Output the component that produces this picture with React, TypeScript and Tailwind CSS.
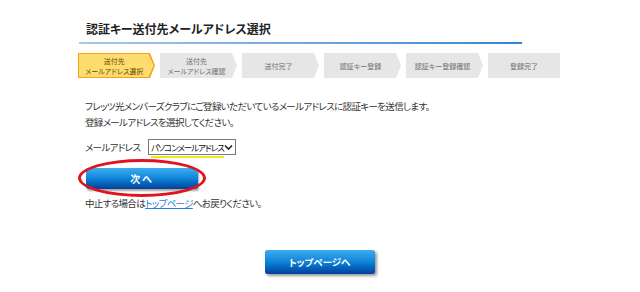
const steps = [
  { lines: ["送付先", "メールアドレス選択"], active: true },
  { lines: ["送付先", "メールアドレス確認"] },
  { lines: ["送付完了"] },
  { lines: ["認証キー登録"] },
  { lines: ["認証キー登録確認"] },
  { lines: ["登録完了"], last: true },
];

const jp = "font-['Noto_Sans_CJK_JP','Noto_Sans',sans-serif] [font-feature-settings:'palt']";

function Step({ lines, active, last }: { lines: string[]; active?: boolean; last?: boolean }) {
  const shape = last
    ? ""
    : "[clip-path:polygon(0_0,calc(100%-5px)_0,100%_50%,calc(100%-5px)_100%,0_100%)]";
  if (active) {
    return (
      <div className={`w-[77px] h-[25px] bg-[#f7a21b] p-[1px] pr-[1.5px] ${shape}`}>
        <div
          className={`w-full h-full bg-[#ffdc6e] flex flex-col items-center justify-center leading-[10px] text-[7px] text-[#6b4a00] pr-[4px] ${shape}`}
        >
          {lines.map((l) => (
            <span key={l}>{l}</span>
          ))}
        </div>
      </div>
    );
  }
  return (
    <div
      className={`${last ? "w-[72px]" : "w-[77px] pr-[4px]"} h-[25px] bg-[#e6e6e6] flex flex-col items-center justify-center leading-[10px] text-[7px] text-[#6f6f6f] ${shape}`}
    >
      {lines.map((l) => (
        <span key={l}>{l}</span>
      ))}
    </div>
  );
}

export default function App() {
  return (
    <div className={`w-[640px] h-[292px] bg-white ${jp} overflow-hidden`}>
      <div className="w-[443px] ml-[79px] pt-[20px]">
        <h1 className="pl-[7px] text-[12px] font-bold text-[#222] leading-[18px]">
          認証キー送付先メールアドレス選択
        </h1>
        <div className="mt-[4px] h-[2px] bg-gradient-to-r from-[#a9c8ea] to-[#2f86cf]" />
      </div>

      <div className="ml-[78px] mt-[9px] flex gap-[5px]">
        {steps.map((s, i) => (
          <Step key={i} {...s} />
        ))}
      </div>

      <div className="ml-[85px] mt-[20px] text-[9.5px] leading-[16px] text-[#333] tracking-[-0.65px]">
        <p>フレッツ光メンバーズクラブにご登録いただいているメールアドレスに認証キーを送信します。</p>
        <p>登録メールアドレスを選択してください。</p>

        <div className="mt-[9px] flex items-center">
          <span className="w-[63px]">メールアドレス</span>
          <div className="relative h-[16px] w-[88px] border border-[#777] bg-white flex items-center pl-[2px] text-[8.5px] text-[#111] whitespace-nowrap tracking-[-1px]">
            <span className="relative shrink-0">
              パソコンメールアドレス
              <span className="absolute left-0 right-0 -bottom-[3px] h-[2px] bg-[#f0e420]" />
            </span>
            <svg className="ml-auto mr-[2px] shrink-0" width="9" height="7" viewBox="0 0 9 7">
              <path d="M1 1.5 L4.5 5 L8 1.5" fill="none" stroke="#222" strokeWidth="1.6" />
            </svg>
          </div>
        </div>

        <div className="relative mt-[13px] ml-[1px] w-[112px] h-[21px]">
          <div className="absolute -left-[8px] -top-[9px] w-[128px] h-[38px] rounded-[50%] border-[3px] border-[#e0141e]" />
          <div className="w-full h-full rounded-[3px] bg-gradient-to-b from-[#39b0f0] via-[#0e84d8] to-[#073f9a] shadow-[1px_2px_2px_rgba(0,0,0,0.35)] flex items-center justify-center text-white text-[10px] font-bold tracking-[2px]">
            次へ
          </div>
        </div>

        <p className="mt-[6px]">
          中止する場合は<span className="text-[#2a7fd6] underline">トップページ</span>へお戻りください。
        </p>
      </div>

      <div className="mt-[39px] flex justify-center">
        <div className="ml-[-1px] w-[110px] h-[24px] rounded-[2px] bg-gradient-to-b from-[#3aaef0] via-[#0d83d8] to-[#073f9a] shadow-[2px_2px_3px_rgba(0,0,0,0.4)] flex items-center justify-center text-white text-[9.5px] font-bold">
          トップページへ
        </div>
      </div>
    </div>
  );
}
